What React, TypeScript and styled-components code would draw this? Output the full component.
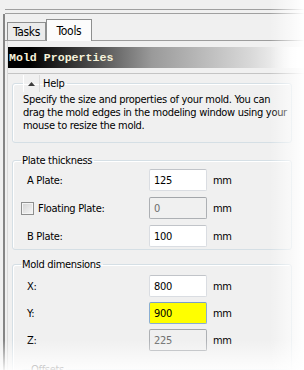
import styled, { createGlobalStyle } from "styled-components";

const GlobalStyle = createGlobalStyle`
  html, body {
    margin: 0;
    padding: 0;
    background: #f0f0f0;
  }
  body {
    font-family: "DejaVu Sans Condensed", "DejaVu Sans", sans-serif;
    font-size: 11px;
    letter-spacing: -0.3px;
    color: #000;
  }
`;

const Screen = styled.div`
    position: relative;
    width: 304px;
    height: 370px;
    overflow: hidden;
    background: #f0f0f0;

    &::after {
        content: "";
        position: absolute;
        inset: 0;
        pointer-events: none;
        background:
            linear-gradient(to right, rgba(255, 255, 255, 0) 270px, #fff 305px),
            linear-gradient(to bottom, rgba(255, 255, 255, 0) 340px, #fff 374px);
    }
`;

const Splitter = styled.div`
    margin: 9px 0 0 5px;
    height: 3px;
    border-top: 1px solid #a0a0a0;
    border-bottom: 1px solid #a0a0a0;
`;

const Frame = styled.div`
    margin-left: 3px;
    border-left: 2px solid #858585;
    height: 360px;
`;

const TabStrip = styled.div`
    display: flex;
    align-items: flex-end;
    height: 26px;
    padding-left: 2px;
    border-bottom: 1px solid #9c9c9c;
`;

const Tab = styled.div<{ $active?: boolean }>`
    box-sizing: border-box;
    display: flex;
    align-items: center;
    justify-content: center;
    width: ${(p) => (p.$active ? "46px" : "39px")};
    height: ${(p) => (p.$active ? "22px" : "18px")};
    margin-bottom: ${(p) => (p.$active ? "-1px" : "0")};
    border: 1px solid #8e8f8f;
    border-bottom: none;
    background: ${(p) => (p.$active ? "#fcfcfc" : "#ebebeb")};
    font-size: 12px;
    padding-top: ${(p) => (p.$active ? "0" : "1px")};
`;

const Panel = styled.div`
    margin-left: 2px;
    border-left: 1px solid #dadada;
    padding-top: 6px;
`;

const TitleBar = styled.div`
    height: 21px;
    line-height: 21px;
    padding-left: 1px;
    background: linear-gradient(
        to right,
        #000 0,
        #000 22px,
        #555 92px,
        #9a9a9a 144px,
        #d8d8d8 242px,
        #fff 290px
    );
    color: #f6f2da;
    font-family: "Liberation Mono", monospace;
    font-weight: bold;
    font-size: 11.6px;
    letter-spacing: 0;
    white-space: nowrap;
`;

const Body = styled.div`
    margin-top: 5px;
    border-top: 1px solid #c4c4c4;
    padding: 1px 12px 0 4px;
    white-space: nowrap;
`;

const Group = styled.fieldset<{ $gap?: number; $top?: number }>`
    margin: 0;
    padding: ${(p) => p.$top ?? 2}px 0 2px 8px;
    border: 1px solid #d5dfe5;
    border-radius: 3px;
    box-shadow: inset 1px 1px 0 #fff;
    display: flex;
    flex-direction: column;
    gap: ${(p) => p.$gap ?? 6}px;
`;

const HelpGroup = styled(Group)`
    padding: 0 4px 10px 10px;
    gap: 0;
`;

const Legend = styled.legend`
    padding: 0 2px 0 1px;
    line-height: 13px;
    font-size: 11px;
`;

const HelpLegend = styled.legend`
    display: flex;
    align-items: center;
    padding: 0 3px 0 0;
    height: 17px;
`;

const ArrowButton = styled.span`
    box-sizing: border-box;
    display: flex;
    align-items: center;
    justify-content: center;
    width: 17px;
    height: 17px;
    border-left: 1px solid #fff;
    border-right: 1px solid #dcdcdc;
    margin-right: 3px;
`;

const HelpText = styled.p`
    margin: 1px 0 0;
    line-height: 13px;
`;

const Spaced = styled.div<{ $gap: number }>`
    margin-top: ${(p) => p.$gap}px;
`;

const Row = styled.div`
    display: grid;
    grid-template-columns: 122px 58px auto;
    column-gap: 6px;
    align-items: center;
    height: 22px;
`;

const Label = styled.span`
    padding-left: 6px;
`;

const CheckLabel = styled.label`
    display: flex;
    align-items: center;
    gap: 4px;
`;

const Box = styled.span`
    box-sizing: border-box;
    width: 13px;
    height: 13px;
    border: 1px solid #8e8f8f;
    background: linear-gradient(135deg, #d2d2d2, #f7f7f7);
    box-shadow: inset 0 0 0 1px #f4f4f4;
`;

type Tone = "normal" | "disabled" | "highlight";

const Field = styled.input<{ $tone: Tone }>`
    box-sizing: border-box;
    width: 58px;
    height: 22px;
    margin: 0;
    padding: 0 4px;
    font: inherit;
    letter-spacing: inherit;
    border-radius: 2px;
    outline: none;
    border: 1px solid
        ${(p) =>
            p.$tone === "disabled"
                ? "#adb0b4"
                : p.$tone === "highlight"
                ? "#8aaed3"
                : "#dadde2"};
    border-top-color: ${(p) =>
        p.$tone === "disabled" ? "#a3a6aa" : p.$tone === "highlight" ? "#7a9fc8" : "#c1c4c9"};
    background: ${(p) =>
        p.$tone === "disabled" ? "#f0f0f0" : p.$tone === "highlight" ? "#ffff00" : "#fff"};
    color: ${(p) => (p.$tone === "disabled" ? "#6d6d6d" : "#000")};
`;

const SubGroup = styled.fieldset`
    margin: 7px 0 0 0;
    padding: 0 0 0 8px;
    height: 40px;
    border: 1px solid #d5dfe5;
    border-radius: 3px;
`;

interface FieldRow {
    label: string;
    value: string;
    tone?: Tone;
    check?: boolean;
}

const plateRows: FieldRow[] = [
    { label: "A Plate:", value: "125" },
    { label: "Floating Plate:", value: "0", tone: "disabled", check: true },
    { label: "B Plate:", value: "100" },
];

const moldRows: FieldRow[] = [
    { label: "X:", value: "800" },
    { label: "Y:", value: "900", tone: "highlight" },
    { label: "Z:", value: "225", tone: "disabled" },
];

const renderRow = (r: FieldRow) => (
    <Row key={r.label}>
        {r.check ? (
            <CheckLabel>
                <Box />
                {r.label}
            </CheckLabel>
        ) : (
            <Label>{r.label}</Label>
        )}
        <Field
            $tone={r.tone ?? "normal"}
            defaultValue={r.value}
            readOnly
        />
        <span>mm</span>
    </Row>
);

const App = () => {
    return (
        <Screen>
            <GlobalStyle />
            <Splitter />
            <Frame>
                <TabStrip>
                    <Tab>Tasks</Tab>
                    <Tab $active>Tools</Tab>
                </TabStrip>
                <Panel>
                    <TitleBar>Mold Properties</TitleBar>
                    <Body>
                        <HelpGroup>
                            <HelpLegend>
                                <ArrowButton>
                                    <svg width="7" height="4" viewBox="0 0 7 4">
                                        <path d="M3.5 0 L7 4 L0 4 Z" fill="#3c3c3c" />
                                    </svg>
                                </ArrowButton>
                                Help
                            </HelpLegend>
                            <HelpText>
                                Specify the size and properties of your mold. You can
                                <br />
                                drag the mold edges in the modeling window using your
                                <br />
                                mouse to resize the mold.
                            </HelpText>
                        </HelpGroup>
                        <Spaced $gap={11}>
                            <Group>
                                <Legend>Plate thickness</Legend>
                                {plateRows.map(renderRow)}
                            </Group>
                        </Spaced>
                        <Spaced $gap={8}>
                            <Group $gap={5} $top={4}>
                                <Legend>Mold dimensions</Legend>
                                {moldRows.map(renderRow)}
                                <SubGroup>
                                    <Legend>Offsets</Legend>
                                </SubGroup>
                            </Group>
                        </Spaced>
                    </Body>
                </Panel>
            </Frame>
        </Screen>
    );
};

export default App;
